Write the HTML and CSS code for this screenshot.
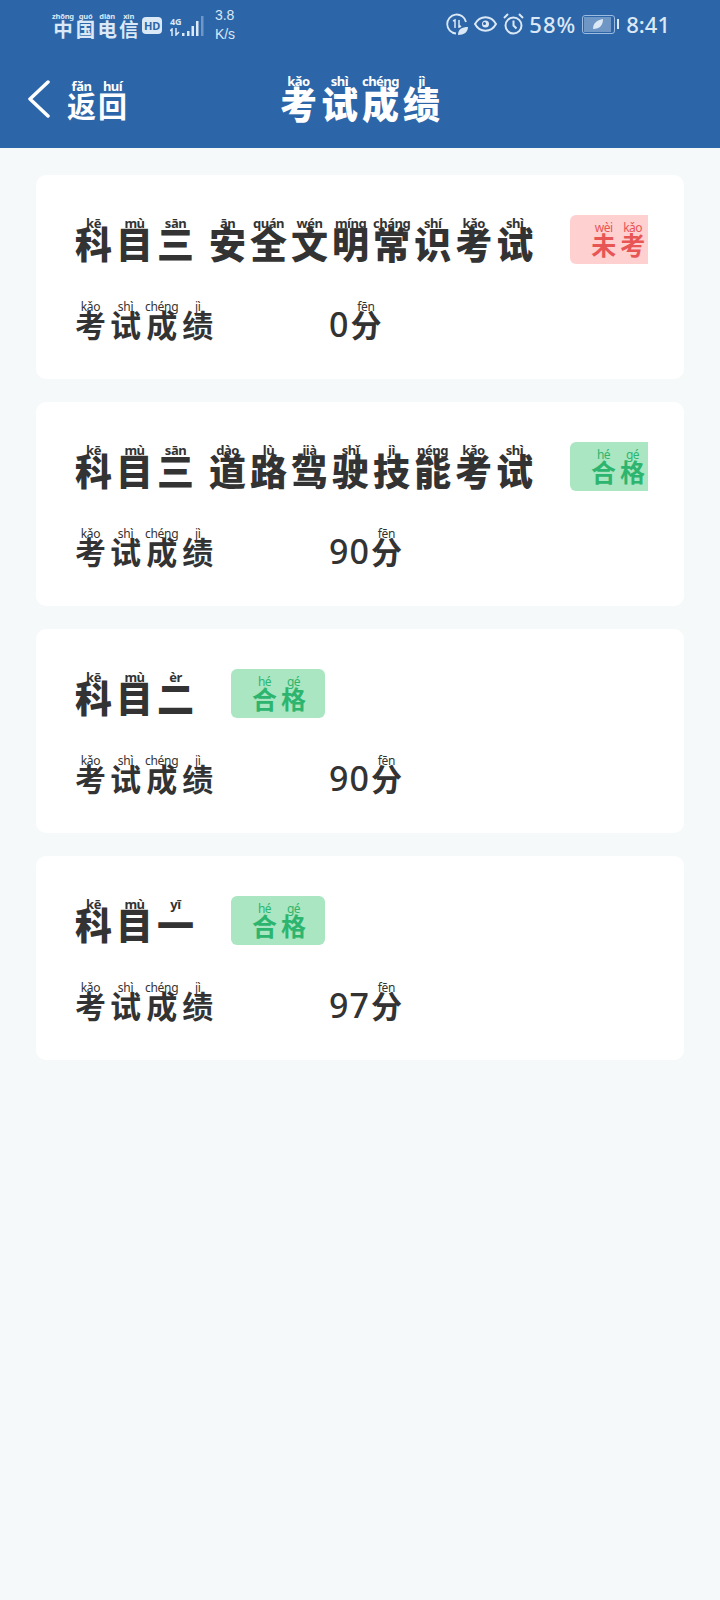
FILE: index.html
```html
<!DOCTYPE html>
<html lang="zh-CN">
<head>
    <meta charset="UTF-8">
    <meta name="viewport" content="width=device-width, initial-scale=1.0">
    <link rel="stylesheet" href="styles.css">
    <title>考试成绩</title>
</head>
<body>
    <header class="header">
        <div class="status-bar">
            <div class="status-left">
                <span class="carrier"><ruby>中<rt>zhōng</rt></ruby><ruby>国<rt>guó</rt></ruby><ruby>电<rt>diàn</rt></ruby><ruby>信<rt>xìn</rt></ruby></span>
                <span class="hd">HD</span>
                <span class="signal">
                    <span class="net">4G
                        <svg width="11" height="8" viewBox="0 0 11 8" fill="none" stroke="#dbe8f5" stroke-width="1.500">
                            <path d="M0 3l2-2v7M6 0v7l3-3"/>
                        </svg>
                    </span>
                    <svg width="24" height="20" viewBox="0 0 24 20">
                        <rect x="1" y="17" width="2.500" height="3" fill="#dbe8f5"/>
                        <rect x="6" y="15" width="2.500" height="5" fill="#dbe8f5"/>
                        <rect x="10.500" y="10" width="2.500" height="10" fill="#dbe8f5"/>
                        <rect x="15" y="5" width="2.500" height="15" fill="#dbe8f5"/>
                        <rect x="20" y="0" width="2.500" height="20" fill="#6f97c6"/>
                    </svg>
                </span>
                <span class="speed">3.8<br>K/s</span>
            </div>
            <div class="status-right">
                <svg class="icon-data" width="22" height="22" viewBox="0 0 22 22" fill="none" stroke="#dbe8f5" stroke-width="1.800">
                    <path d="M20 9A9.500 9.500 0 1 0 10 20.500"/>
                    <path d="M7 8l2-1v8M13 7v8M13 12l2 2" stroke-width="1.500"/>
                    <path d="M12 22c0-6 4-8 10-8 0 5-4 8-10 8z" fill="#dbe8f5" stroke="none"/>
                </svg>
                <svg class="icon-eye" width="23" height="16" viewBox="0 0 23 16" fill="none" stroke="#dbe8f5" stroke-width="2">
                    <path d="M1 8c5-9 16-9 21 0-5 9-16 9-21 0z"/>
                    <circle cx="11.500" cy="8" r="3.500" fill="#dbe8f5" stroke="none"/>
                    <circle cx="10.500" cy="7.500" r="1.500" fill="#2c65a8" stroke="none"/>
                </svg>
                <svg class="icon-alarm" width="21" height="22" viewBox="0 0 21 22" fill="none" stroke="#dbe8f5" stroke-width="2">
                    <circle cx="10.500" cy="12.500" r="8"/>
                    <path d="M10.500 7.500v5l3 3M1 5l4-4M20 5l-4-4"/>
                </svg>
                <span class="battery-pct">58%</span>
                <span class="battery">
                    <span class="battery-body">
                        <span class="battery-fill">
                            <svg width="12" height="12" viewBox="0 0 12 12"><path d="M1 11C1 5 5 2 11 1c0 6-3 10-10 10z" fill="#dbe8f5"/></svg>
                        </span>
                    </span>
                    <span class="battery-tip"></span>
                </span>
                <span class="clock">8:41</span>
            </div>
        </div>
        <div class="nav">
            <div class="back">
                <svg class="back-arrow" width="24" height="38" viewBox="0 0 24 38" fill="none" stroke="#fff" stroke-width="3.500" stroke-linecap="round" stroke-linejoin="round">
                    <path d="M21 2L3 19l18 17"/>
                </svg>
                <span class="back-text"><ruby>返<rt>fǎn</rt></ruby><ruby>回<rt>huí</rt></ruby></span>
            </div>
            <h1 class="page-title"><ruby>考<rt>kǎo</rt></ruby><ruby>试<rt>shì</rt></ruby><ruby>成<rt>chéng</rt></ruby><ruby>绩<rt>jì</rt></ruby></h1>
        </div>
    </header>

    <main class="list">
        <section class="card">
            <div class="card-top">
                <span class="subject"><ruby>科<rt>kē</rt></ruby><ruby>目<rt>mù</rt></ruby><ruby>三<rt>sān</rt></ruby><span class="gap"></span><ruby>安<rt>ān</rt></ruby><ruby>全<rt>quán</rt></ruby><ruby>文<rt>wén</rt></ruby><ruby>明<rt>míng</rt></ruby><ruby>常<rt>cháng</rt></ruby><ruby>识<rt>shí</rt></ruby><ruby>考<rt>kǎo</rt></ruby><ruby>试<rt>shì</rt></ruby></span>
                <span class="badge badge-red badge-cut"><ruby>未<rt>wèi</rt></ruby><ruby>考<rt>kǎo</rt></ruby></span>
            </div>
            <div class="score-row">
                <span class="score-label"><ruby>考<rt>kǎo</rt></ruby><ruby>试<rt>shì</rt></ruby><ruby>成<rt>chéng</rt></ruby><ruby>绩<rt>jì</rt></ruby></span>
                <span class="score-value"><span class="num">0</span><ruby>分<rt>fēn</rt></ruby></span>
            </div>
        </section>

        <section class="card">
            <div class="card-top">
                <span class="subject"><ruby>科<rt>kē</rt></ruby><ruby>目<rt>mù</rt></ruby><ruby>三<rt>sān</rt></ruby><span class="gap"></span><ruby>道<rt>dào</rt></ruby><ruby>路<rt>lù</rt></ruby><ruby>驾<rt>jià</rt></ruby><ruby>驶<rt>shǐ</rt></ruby><ruby>技<rt>jì</rt></ruby><ruby>能<rt>néng</rt></ruby><ruby>考<rt>kǎo</rt></ruby><ruby>试<rt>shì</rt></ruby></span>
                <span class="badge badge-green badge-cut"><ruby>合<rt>hé</rt></ruby><ruby>格<rt>gé</rt></ruby></span>
            </div>
            <div class="score-row">
                <span class="score-label"><ruby>考<rt>kǎo</rt></ruby><ruby>试<rt>shì</rt></ruby><ruby>成<rt>chéng</rt></ruby><ruby>绩<rt>jì</rt></ruby></span>
                <span class="score-value"><span class="num">90</span><ruby>分<rt>fēn</rt></ruby></span>
            </div>
        </section>

        <section class="card">
            <div class="card-top">
                <span class="subject"><ruby>科<rt>kē</rt></ruby><ruby>目<rt>mù</rt></ruby><ruby>二<rt>èr</rt></ruby></span>
                <span class="badge badge-green"><ruby>合<rt>hé</rt></ruby><ruby>格<rt>gé</rt></ruby></span>
            </div>
            <div class="score-row">
                <span class="score-label"><ruby>考<rt>kǎo</rt></ruby><ruby>试<rt>shì</rt></ruby><ruby>成<rt>chéng</rt></ruby><ruby>绩<rt>jì</rt></ruby></span>
                <span class="score-value"><span class="num">90</span><ruby>分<rt>fēn</rt></ruby></span>
            </div>
        </section>

        <section class="card">
            <div class="card-top">
                <span class="subject"><ruby>科<rt>kē</rt></ruby><ruby>目<rt>mù</rt></ruby><ruby>一<rt>yī</rt></ruby></span>
                <span class="badge badge-green"><ruby>合<rt>hé</rt></ruby><ruby>格<rt>gé</rt></ruby></span>
            </div>
            <div class="score-row">
                <span class="score-label"><ruby>考<rt>kǎo</rt></ruby><ruby>试<rt>shì</rt></ruby><ruby>成<rt>chéng</rt></ruby><ruby>绩<rt>jì</rt></ruby></span>
                <span class="score-value"><span class="num">97</span><ruby>分<rt>fēn</rt></ruby></span>
            </div>
        </section>
    </main>
</body>
</html>
```

FILE: styles.css
```css
body {
    margin: 0;
    min-height: 1600px;
    background-color: #f5f9fa;
    color: #333;
    font-family: "Noto Sans", "Noto Sans CJK SC", sans-serif;
}

ruby {
    ruby-position: over;
}

/* pinyin sits right on top of the character */
rt {
    position: relative;
    top: 5px;
    font-family: "Noto Sans", sans-serif;
    line-height: 1;
    letter-spacing: -0.5px;
    text-align: center;
}

.header {
    height: 148px;
    background-color: #2c65a8;
    color: #fff;
}

.status-bar {
    height: 48px;
    display: flex;
    justify-content: space-between;
    align-items: center;
    padding: 0 50px 0 51px;
    color: #dbe8f5;
}

.status-left,
.status-right {
    display: flex;
    align-items: center;
}

.carrier {
    font-size: 19.500px;
    font-weight: 700;
    line-height: 24px;
    margin-top: 4px;
}

.carrier ruby {
    margin: 0 1px;
}

.carrier rt {
    top: 2px;
    font-size: 7.500px;
    letter-spacing: -0.2px;
}

.hd {
    margin-left: 3px;
    margin-top: 3px;
    padding: 0 1.500px;
    border-radius: 4px;
    background-color: #dbe8f5;
    color: #2c65a8;
    font-size: 11px;
    font-weight: 700;
    line-height: 17px;
}

.signal {
    display: flex;
    align-items: flex-end;
    margin-left: 8px;
    margin-top: 4px;
}

.net {
    display: flex;
    flex-direction: column;
    width: 11px;
    font-size: 9px;
    font-weight: 700;
    line-height: 12px;
}

.speed {
    margin-left: 10px;
    margin-top: 2px;
    font-family: "Liberation Sans", sans-serif;
    font-size: 14px;
    line-height: 19px;
}

.icon-data {
    margin-right: 6px;
}

.icon-eye {
    margin-right: 6px;
}

.icon-alarm {
    margin-right: 5px;
}

.battery-pct,
.clock {
    font-size: 22px;
    font-weight: 500;
    line-height: 26px;
}

.battery-pct {
    letter-spacing: 1px;
}

.battery {
    display: flex;
    align-items: center;
    gap: 2px;
    margin-left: 6px;
}

.battery-body {
    display: block;
    width: 29px;
    height: 15px;
    padding: 1px;
    border: 1px solid #9dbce0;
    border-radius: 3px;
}

.battery-fill {
    display: flex;
    justify-content: center;
    align-items: center;
    width: 27px;
    height: 15px;
    background-color: #6f97c6;
}

.battery-tip {
    width: 2px;
    height: 10px;
    background-color: #dbe8f5;
}

.clock {
    margin-left: 7px;
}

.nav {
    position: relative;
    height: 100px;
}

.back {
    position: absolute;
    left: 27px;
    top: 30px;
    display: flex;
    align-items: center;
    gap: 15px;
}

.back-arrow {
    margin-top: -4px;
}

.back-text {
    font-size: 29px;
    font-weight: 700;
    line-height: 34px;
}

.back-text ruby {
    margin: 0 1px;
}

.back-text rt {
    top: 2px;
    font-size: 13px;
}

.page-title {
    margin: 0;
    padding-top: 34px;
    text-align: center;
    font-size: 37px;
    font-weight: 900;
    line-height: 46px;
}

.page-title ruby {
    margin: 0 2px;
}

.page-title rt {
    top: 3px;
    font-size: 13px;
    font-weight: 700;
}

.list {
    display: flex;
    flex-direction: column;
    gap: 23px;
    padding: 27px 36px 0;
}

.card {
    box-sizing: border-box;
    height: 204px;
    padding: 40px 36px 0 37px;
    border-radius: 10px;
    background-color: #fff;
}

.card-top {
    display: flex;
    align-items: center;
    height: 49px;
}

.subject {
    flex-shrink: 0;
    font-size: 37px;
    font-weight: 900;
    line-height: 44px;
    white-space: nowrap;
}

.subject ruby {
    margin: 0 2px;
}

.subject rt {
    font-size: 13px;
    font-weight: 700;
}

.gap {
    display: inline-block;
    width: 11px;
}

.badge {
    flex-shrink: 1;
    box-sizing: border-box;
    width: 94px;
    min-width: 0;
    height: 49px;
    margin-left: 35px;
    padding: 15px 0 0 19px;
    border-radius: 6px;
    overflow: hidden;
    font-size: 25px;
    font-weight: 700;
    line-height: 30px;
    white-space: nowrap;
}

/* long subject leaves the badge narrower than its text box */
.badge-cut {
    border-radius: 6px 0 0 6px;
}

.badge ruby {
    margin: 0 2px;
}

.badge rt {
    top: 2px;
    font-size: 12px;
    font-weight: 400;
}

.badge-red {
    background-color: #ffd0d0;
    color: #e85555;
}

.badge-green {
    background-color: #a9e6c1;
    color: #2db56f;
}

.score-row {
    display: flex;
    align-items: flex-end;
    margin-top: 32px;
}

.score-label {
    width: 256px;
    font-size: 31px;
    font-weight: 700;
    line-height: 38px;
    white-space: nowrap;
}

.score-label ruby {
    margin: 0 2px;
}

.score-label rt {
    font-size: 12px;
    font-weight: 400;
    letter-spacing: -0.3px;
}

.score-value {
    font-size: 31px;
    font-weight: 700;
    line-height: 38px;
}

.score-value ruby {
    margin-left: 1px;
}

.num {
    font-size: 34px;
    font-weight: 500;
    letter-spacing: 1px;
}

.score-value rt {
    font-size: 12px;
    font-weight: 400;
    letter-spacing: -0.3px;
}
```
